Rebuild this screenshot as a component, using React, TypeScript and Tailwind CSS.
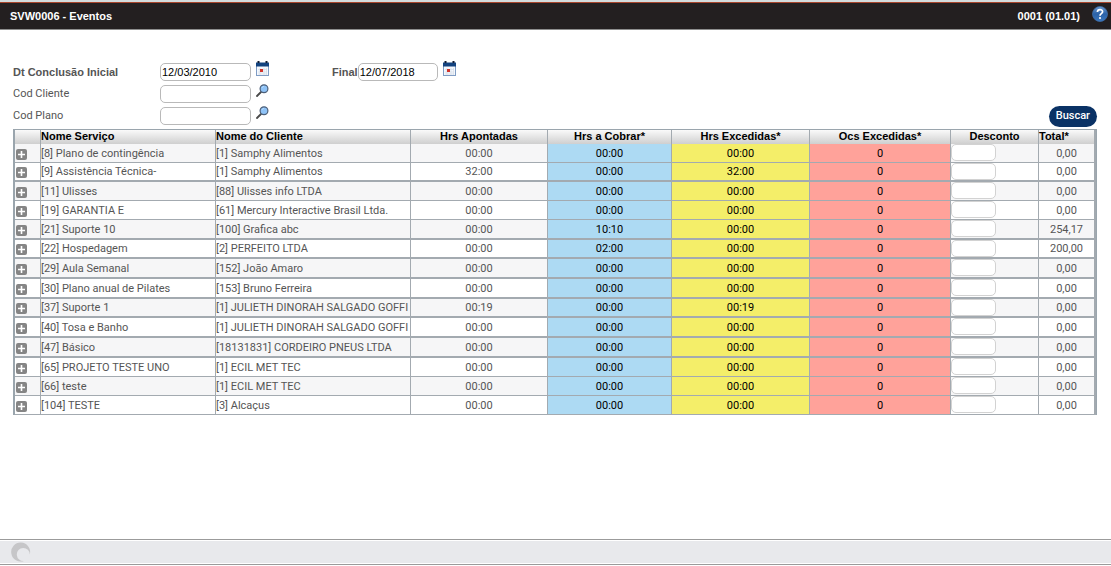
import React from "react";

type Row = {
  service: string;
  client: string;
  logged: string;
  billable: string;
  exceeded: string;
  total: string;
  size: string;
  line: string;
};

const SHORT = "h-[19px]";
const TALL = "h-[20px]";
const THIN = "border-b";
const THICK = "border-b-2";

function row(
  service: string,
  client: string,
  size: string,
  line: string,
  logged = "00:00",
  billable = "00:00",
  exceeded = "00:00",
  total = "0,00",
): Row {
  return { service, client, size, line, logged, billable, exceeded, total };
}

const ROWS: Row[] = [
  row("[8] Plano de contingência", "[1] Samphy Alimentos", SHORT, THIN),
  row("[9] Assistência Técnica-", "[1] Samphy Alimentos", SHORT, THICK, "32:00", "00:00", "32:00"),
  row("[11] Ulisses", "[88] Ulisses info LTDA", SHORT, THIN),
  row("[19] GARANTIA E", "[61] Mercury Interactive Brasil Ltda.", SHORT, THIN),
  row("[21] Suporte 10", "[100] Grafica abc", TALL, THICK, "00:00", "10:10", "00:00", "254,17"),
  row("[22] Hospedagem", "[2] PERFEITO LTDA", SHORT, THICK, "00:00", "02:00", "00:00", "200,00"),
  row("[29] Aula Semanal", "[152] João Amaro", TALL, THICK),
  row("[30] Plano anual de Pilates", "[153] Bruno Ferreira", TALL, THICK),
  row("[37] Suporte 1", "[1] JULIETH DINORAH SALGADO GOFFI", SHORT, THICK, "00:19", "00:00", "00:19"),
  row("[40] Tosa e Banho", "[1] JULIETH DINORAH SALGADO GOFFI", TALL, THICK),
  row("[47] Básico", "[18131831] CORDEIRO PNEUS LTDA", TALL, THICK),
  row("[65] PROJETO TESTE UNO", "[1] ECIL MET TEC", SHORT, THIN),
  row("[66] teste", "[1] ECIL MET TEC", SHORT, THIN),
  row("[104] TESTE", "[3] Alcaçus", SHORT, THIN),
];

function CalendarIcon() {
  return (
    <svg width="13" height="15" viewBox="0 0 13 15" aria-hidden="true">
      <rect x=".5" y="3" width="12" height="11.500" fill="#f4f8fd" stroke="#7f9cc4" />
      <path d="M0 1.500h13v4H0z" fill="#12427f" />
      <path d="M1.500 0h2v2h-2zM9.500 0h2v2h-2z" fill="#111c33" />
      <path d="M2 8.500h9M2 11h9M2 13h9M4 7v7M8 7v7M10.500 7v7" stroke="#d5dce6" strokeWidth=".7" />
      <rect x="4" y="8" width="3" height="3" fill="#d2342b" />
    </svg>
  );
}

function LensIcon() {
  return (
    <svg width="13" height="13" viewBox="0 0 13 13" aria-hidden="true">
      <path d="M1 12l4.500-4.500" stroke="#4a4a4a" strokeWidth="1.800" strokeLinecap="round" />
      <circle cx="8" cy="4.700" r="3.900" fill="#8fc3f7" stroke="#4d5f78" strokeWidth="1.200" />
      <path d="M6 4a2.300 2.300 0 0 1 2-1.700" stroke="#b5dbff" fill="none" />
    </svg>
  );
}

function PlusIcon() {
  return (
    <svg width="11" height="11" viewBox="0 0 11 11" aria-hidden="true">
      <rect width="11" height="11" rx="2" fill="#858585" />
      <path d="M5.500 2v7M2 5.500h7" stroke="#fff" strokeWidth="1.600" />
    </svg>
  );
}

function HelpIcon() {
  return (
    <svg width="16" height="16" viewBox="0 0 16 16" aria-hidden="true">
      <defs>
        <linearGradient id="help" x1="0" y1="0" x2="0" y2="1">
          <stop offset="0" stopColor="#6c9bd0" />
          <stop offset=".5" stopColor="#2b62a8" />
          <stop offset="1" stopColor="#3b78bf" />
        </linearGradient>
      </defs>
      <circle cx="8" cy="8" r="7.500" fill="url(#help)" stroke="#3d6ba5" strokeWidth=".8" />
      <path
        d="M5.400 6.100c0-3.300 5.200-3.200 5.200-.3C10.600 7.700 8 7.700 8 9.800"
        fill="none"
        stroke="#fff"
        strokeWidth="1.700"
      />
      <circle cx="8" cy="12" r="1.100" fill="#fff" />
    </svg>
  );
}

function SpinnerIcon() {
  return (
    <svg width="20" height="20" viewBox="0 0 20 20" aria-hidden="true">
      <path
        d="M10 .5a9.500 9.500 0 1 0 3 18.400A6.500 6.500 0 1 1 18.800 12.500 9.500 9.500 0 0 0 10 .5z"
        fill="#c6c6c8"
      />
    </svg>
  );
}

const field =
  "h-[18px] min-w-0 rounded-[5px] border border-[#b9b9b9] bg-white px-px text-[11px] leading-4 text-black outline-none";
const heading = "border-r border-[#a3aab0] p-0 align-top font-bold";
const cell = "border-r border-[#a3aab0]";

export default function App() {
  return (
    <div className="flex min-h-screen flex-col bg-white font-['Liberation_Sans',Arial,sans-serif] text-[11px] leading-4 text-[#555]">
      <header className="flex h-[30px] items-center border-t-2 border-b border-t-[#d3dcdd] border-b-[#8d8d8d] bg-[#231f20] pr-[3px] pl-[10px] font-bold text-white shadow-[inset_0_1px_0_#a8452c]">
        <h1 className="grow">SVW0006 - Eventos</h1>
        <span>0001 (01.01)</span>
        <button type="button" aria-label="Ajuda" className="-mt-1 ml-3">
          <HelpIcon />
        </button>
      </header>

      <main className="grow pt-[31px] pr-[14px] pl-[13px]">
        <form onSubmit={(e) => e.preventDefault()} className="mb-0.5">
          <div className="flex h-[22px] items-center">
            <label htmlFor="start" className="w-[147px] font-bold">
              Dt Conclusão Inicial
            </label>
            <input id="start" defaultValue="12/03/2010" className={`${field} w-[91px]`} />
            <button type="button" aria-label="Abrir calendário inicial" className="ml-[5px] self-start">
              <CalendarIcon />
            </button>
            <label htmlFor="end" className="ml-[63px] font-bold">
              Final
            </label>
            <input id="end" defaultValue="12/07/2018" className={`${field} w-20`} />
            <button type="button" aria-label="Abrir calendário final" className="ml-[5px] self-start">
              <CalendarIcon />
            </button>
          </div>
          <div className="flex h-[22px] items-center">
            <label htmlFor="client" className="w-[147px] font-['Roboto',sans-serif]">
              Cod Cliente
            </label>
            <input id="client" className={`${field} w-[91px]`} />
            <button type="button" aria-label="Pesquisar cliente" className="ml-[5px] self-start pt-px">
              <LensIcon />
            </button>
          </div>
          <div className="flex h-[22px] items-center">
            <label htmlFor="plan" className="w-[147px] font-['Roboto',sans-serif]">
              Cod Plano
            </label>
            <input id="plan" className={`${field} w-[91px]`} />
            <button type="button" aria-label="Pesquisar plano" className="ml-[5px] self-start pt-px">
              <LensIcon />
            </button>
            <button
              type="submit"
              className="ml-auto h-[21px] rounded-full bg-[#0a3265] px-[7px] font-['Roboto',sans-serif] text-[11px] font-medium text-white"
            >
              Buscar
            </button>
          </div>
        </form>

        <table className="w-full table-fixed border-separate border-spacing-0 border-t border-r border-l-2 border-[#9aa5ad] whitespace-nowrap">
          <colgroup>
            <col className="w-[26px]" />
            <col className="w-[175px]" />
            <col className="w-[195px]" />
            <col className="w-[137px]" />
            <col className="w-[124px]" />
            <col className="w-[138px]" />
            <col className="w-[141px]" />
            <col className="w-[88px]" />
            <col className="w-[57px]" />
          </colgroup>
          <thead>
            <tr className="h-[14px] bg-linear-to-b from-[#fafafa] to-[#cfcfcf] leading-[13px] text-black">
              <th className={heading} aria-label="Detalhes" />
              <th className={`${heading} text-left`}>Nome Serviço</th>
              <th className={`${heading} text-left`}>Nome do Cliente</th>
              <th className={heading}>Hrs Apontadas</th>
              <th className={heading}>Hrs a Cobrar*</th>
              <th className={heading}>Hrs Excedidas*</th>
              <th className={heading}>Ocs Excedidas*</th>
              <th className={heading}>Desconto</th>
              <th className={`${heading} border-r-2 text-left`}>Total*</th>
            </tr>
          </thead>
          <tbody className="font-['Roboto',sans-serif]">
            {ROWS.map((r) => {
              const box = `${cell} ${r.line} p-0`;
              const text = `${cell} ${r.line} px-0 pt-px pb-0`;
              return (
                <tr key={r.service} className={`${r.size} odd:bg-[#f6f6f7]`}>
                  <td className={box}>
                    <button type="button" aria-label={`Expandir ${r.service}`} className="ml-px block pt-0.5">
                      <PlusIcon />
                    </button>
                  </td>
                  <td className={text}>{r.service}</td>
                  <td className={text}>{r.client}</td>
                  <td className={`${text} text-center`}>{r.logged}</td>
                  <td className={`${text} bg-[#addaf3] text-center text-black`}>{r.billable}</td>
                  <td className={`${text} bg-[#f4ee69] text-center text-black`}>{r.exceeded}</td>
                  <td className={`${text} bg-[#ffa29a] text-center text-black`}>0</td>
                  <td className={`${box} align-top`}>
                    <input
                      aria-label={`Desconto ${r.service}`}
                      className="block h-[17px] w-[45px] rounded-[5px] border border-[#d2d2d2] bg-white px-px outline-none"
                    />
                  </td>
                  <td className={`${text} border-r-2 text-center`}>{r.total}</td>
                </tr>
              );
            })}
          </tbody>
        </table>
      </main>

      <footer className="mb-px flex h-[26px] items-center border-y border-[#9b9b9b] bg-[#e8e9ec] pl-[11px] shadow-[inset_0_1px_0_#fff,inset_0_-1px_0_#fff]">
        <SpinnerIcon />
      </footer>
    </div>
  );
}
